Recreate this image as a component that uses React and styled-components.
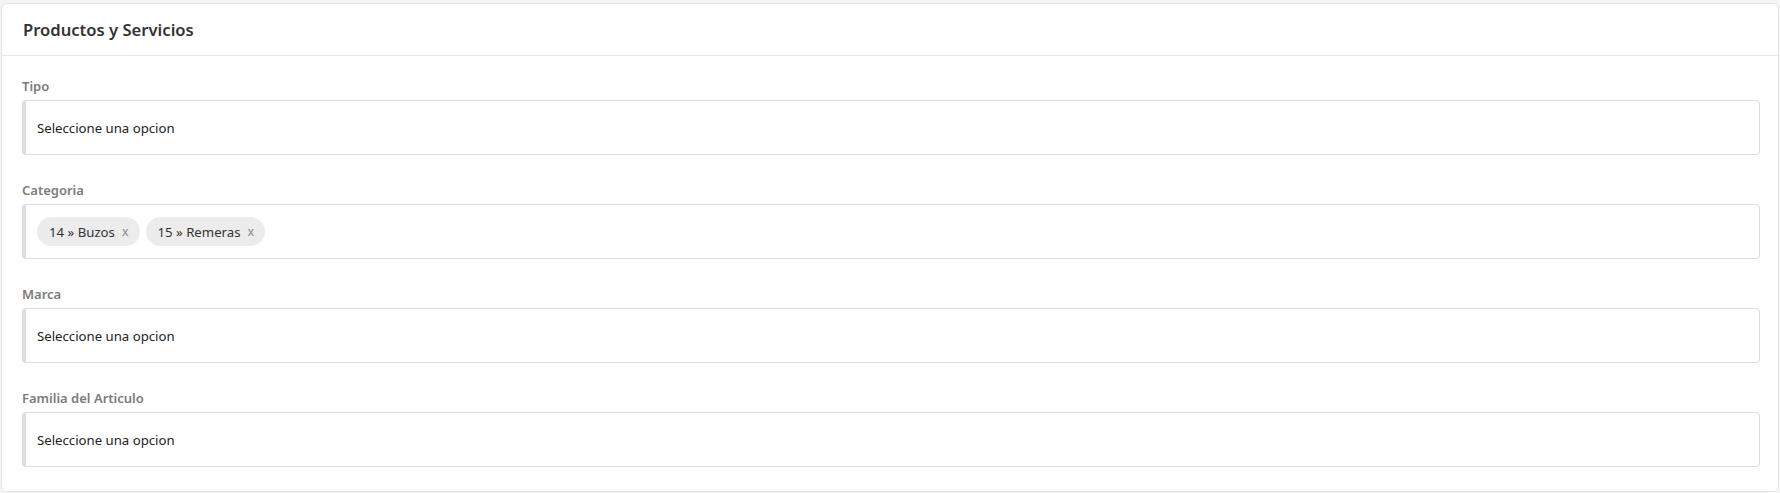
import React from 'react';
import styled, { createGlobalStyle } from 'styled-components';

const GlobalStyle = createGlobalStyle`
    body {
        margin: 0;
        padding: 3px 1px 0 1px;
        background: #f4f4f4;
        font-family: "Noto Sans", "Open Sans", Arial, sans-serif;
        color: #222;
    }
`

const Card = styled.section`
    background: #fff;
    border: 1px solid #e6e6e6;
    border-radius: 6px;
    height: 489px;
    box-sizing: border-box;
    overflow: hidden;
`

const CardHeader = styled.header`
    height: 52px;
    display: flex;
    align-items: center;
    padding: 0 21px;
    border-bottom: 1px solid #e7e7e7;
    box-sizing: border-box;
`

const Title = styled.h2`
    margin: 0;
    font-size: 16.6px;
    font-weight: 600;
    color: #333;
`

const CardBody = styled.div`
    padding: 21px 18px 0 20px;
    display: flex;
    flex-direction: column;
    gap: 26px;
`

const Field = styled.div`
    display: flex;
    flex-direction: column;
`

const Label = styled.label`
    font-size: 13px;
    font-weight: 600;
    color: #7b7b7b;
    line-height: 19px;
    margin-bottom: 4px;
`

const SelectBox = styled.div`
    height: 55px;
    box-sizing: border-box;
    border: 1px solid #dcdcdc;
    border-left: 4px solid #dedede;
    border-radius: 4px;
    display: flex;
    align-items: center;
    gap: 6px;
    padding: 0 11px;
    font-size: 13.2px;
    color: #222;
`

const Chip = styled.span`
    display: inline-flex;
    align-items: center;
    height: 29px;
    padding: 0 11px 0 12px;
    border-radius: 15px;
    background: #ececec;
    font-size: 13.2px;
    color: #333;
`

const ChipClose = styled.span`
    margin-left: 7px;
    color: #8a8a8a;
    font-size: 12.5px;
`

const fields = [
    { label: 'Tipo' },
    { label: 'Categoria', chips: ['14 » Buzos', '15 » Remeras'] },
    { label: 'Marca' },
    { label: 'Familia del Articulo' },
];

const App = () => {
    return (
        <>
            <GlobalStyle />
            <Card>
                <CardHeader>
                    <Title>Productos y Servicios</Title>
                </CardHeader>
                <CardBody>
                    {fields.map((f) => (
                        <Field key={f.label}>
                            <Label>{f.label}</Label>
                            <SelectBox>
                                { f.chips ? f.chips.map((c) => (
                                    <Chip key={c}>{c}<ChipClose>x</ChipClose></Chip>
                                )) : 'Seleccione una opcion' }
                            </SelectBox>
                        </Field>
                    ))}
                </CardBody>
            </Card>
        </>
    );
}

export default App;
